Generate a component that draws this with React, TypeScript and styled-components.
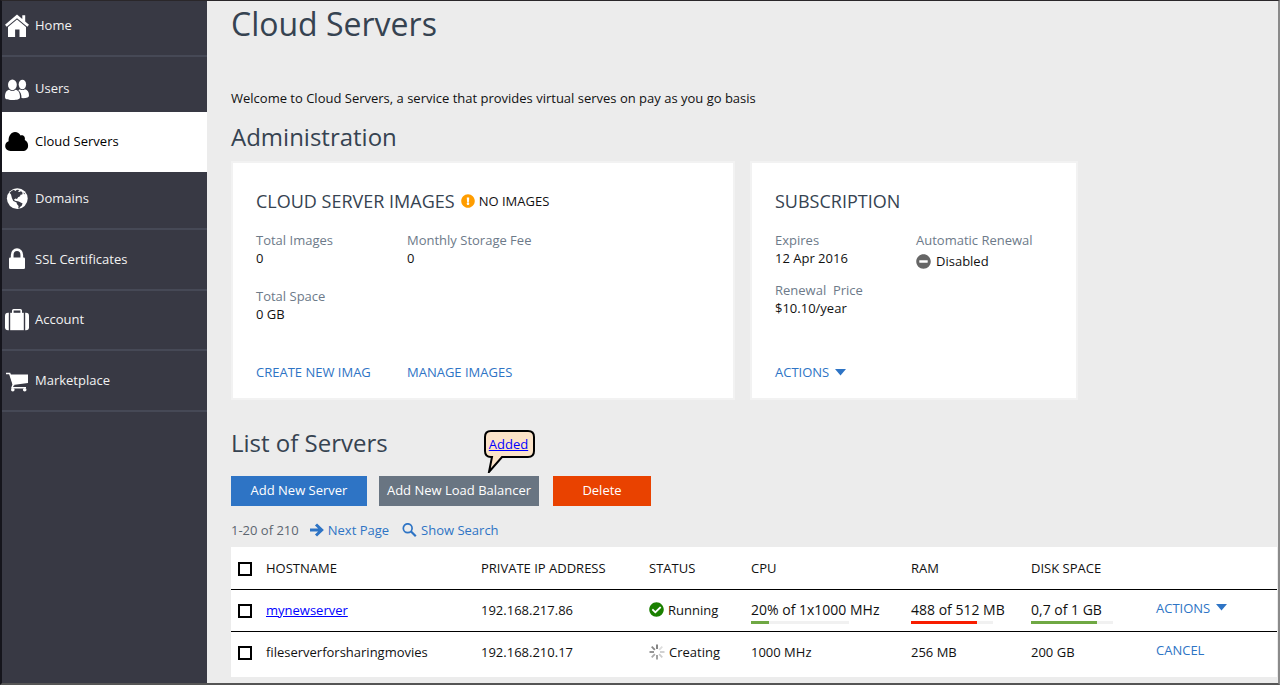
import React from 'react';
import styled, { createGlobalStyle } from 'styled-components';
import { FaCheckCircle, FaExclamationCircle, FaMinusCircle } from 'react-icons/fa';

const GlobalStyle = createGlobalStyle`
  *, *::before, *::after { box-sizing: border-box; }
  body { margin: 0; background: #ececec; }
  body, button { font: 13px/18px "Open Sans", sans-serif; color: #111; }
  button { border: 0; padding: 0; background: none; cursor: pointer; }
  h1, h2, h3, p, dl, dd, ul { margin: 0; padding: 0; }
`;

const Page = styled.div`
  display: flex;
  min-height: 100vh;
  border-style: solid;
  border-width: 1px 2px 2px;
  border-color: #2a272a #8a8a8a #555 #15151c;
`;

const Sidebar = styled.nav`
  flex: 0 0 205px;
  background: #383944;
`;

const NavItem = styled.a<{ $height: number; $top: number; $line?: boolean; $active?: boolean }>`
  display: flex;
  align-items: center;
  align-content: flex-start;
  flex-wrap: wrap;
  gap: 6px;
  height: ${(p) => p.$height}px;
  padding: ${(p) => p.$top}px 0 0 3px;
  border-bottom: ${(p) => (p.$line ? '2px solid #464956' : '0')};
  background: ${(p) => (p.$active ? '#fff' : 'transparent')};
  color: ${(p) => (p.$active ? '#000' : '#f2f2f2')};
  text-decoration: none;

  svg { width: 24px; height: 24px; color: ${(p) => (p.$active ? '#000' : '#fff')}; }
`;

const Main = styled.main`
  flex: 1;
  min-width: 0;
  padding: 1px 1px 6px 24px;
`;

const Title = styled.h1`
  font-size: 32px;
  line-height: 44px;
  font-weight: 400;
  color: #364351;
`;

const Intro = styled.p`
  margin: 43px 0 14px;
`;

const Heading = styled.h2`
  font-size: 24px;
  line-height: 32px;
  font-weight: 400;
  color: #364351;
`;

const Cards = styled.div`
  display: grid;
  grid-template-columns: 504fr 328fr;
  gap: 15px;
  max-width: 847px;
  margin: 8px 0 27px;
`;

const Card = styled.section`
  display: flex;
  flex-direction: column;
  min-height: 239px;
  padding: 26px 23px 17px;
  border: 2px solid #f2f2f2;
  background: #fff;
`;

const CardHead = styled.div`
  display: flex;
  align-items: center;
  gap: 6px;
  margin-bottom: 18px;
`;

const CardTitle = styled.h3`
  font-size: 18px;
  line-height: 24px;
  font-weight: 400;
  color: #364351;
`;

const Note = styled.span<{ $gap: number }>`
  display: flex;
  align-items: center;
  gap: ${(p) => p.$gap}px;
`;

const Facts = styled.dl<{ $column: number; $rowGap: number }>`
  display: grid;
  grid-template-columns: ${(p) => p.$column}px auto;
  row-gap: ${(p) => p.$rowGap}px;

  dt { color: #6d7a89; white-space: pre; }
  dd ${Note} { padding-top: 3px; }
`;

const CardLinks = styled.div<{ $column: number }>`
  display: grid;
  grid-template-columns: ${(p) => p.$column}px auto;
  justify-items: start;
  margin-top: auto;
`;

const LinkButton = styled.button`
  display: inline-flex;
  align-items: center;
  gap: 6px;
  color: #2e74c5;
`;

const ListHead = styled.div`
  margin-bottom: 17px;
`;

const Buttons = styled.div`
  display: flex;
  gap: 12px;
  margin-bottom: 15px;
`;

const ButtonSlot = styled.div`
  position: relative;
  margin-right: 2px;
`;

const Button = styled.button<{ $color: string; $width: number }>`
  width: ${(p) => p.$width}px;
  height: 30px;
  padding-bottom: 2px;
  background: ${(p) => p.$color};
  color: #fff;
`;

const Callout = styled.div`
  position: absolute;
  left: 105px;
  bottom: 33px;
  width: 51px;
  height: 43px;
  padding: 5px 2px 0 0;
  text-align: center;

  svg { position: absolute; inset: 0; }
  a { position: relative; color: #00f; }
`;

const Pager = styled.div`
  display: flex;
  align-items: center;
  margin-bottom: 8px;
  color: #5d6670;
  gap: 11px;
`;

const PagerButton = styled(LinkButton)`
  gap: 4px;
  & + & { margin-left: 2px; }
`;

const Table = styled.table`
  width: 100%;
  table-layout: fixed;
  border-collapse: collapse;
  background: #fff;

  th, td { height: 42px; padding: 11px 0 0; text-align: left; vertical-align: top; font-weight: 400; white-space: nowrap; }
  th { padding-top: 12px; }
  td { border-top: 1px solid #000; }
  tbody tr:last-child td { height: 46px; }
  td a { color: #00f; }
`;

const Check = styled.input`
  appearance: none;
  display: block;
  width: 14px;
  height: 14px;
  margin: 3px 0 0 7px;
  border: 2px solid #000;
  background: #fff;
  &:checked { background: #000; box-shadow: inset 0 0 0 2px #fff; }
`;

const RowAction = styled(LinkButton)`
  display: flex;
  margin-top: -2px;
`;

const Usage = styled.div`
  font-size: 14px;
`;

const Track = styled.div<{ $width: number }>`
  width: ${(p) => p.$width}px;
  height: 3px;
  margin-top: 2px;
  background: #f1f1f1;
`;

const Fill = styled.div<{ $color: string }>`
  height: 3px;
  background: ${(p) => p.$color};
`;

const HomeIcon = () => (
  <svg viewBox="0 0 24 24" fill="currentColor" aria-hidden="true">
    <path d="M0 11.800 12 1.600l5.300 4.500V2.200h2.900v6.300l3.800 3.300-1.700 2L12 5.200 1.700 13.800z" />
    <path d="m12 6.600 9 7.500V24h-6.500v-7.600h-4.400V24H3v-9.900z" />
  </svg>
);

const UsersIcon = () => (
  <svg viewBox="0 1 24 24" overflow="visible" fill="currentColor" aria-hidden="true">
    <g transform="translate(0 2.500)">
      <ellipse cx="7.400" cy="7.300" rx="4.400" ry="5.400" />
      <ellipse cx="17.400" cy="7" rx="3.700" ry="4.800" />
      <path d="M0 19.500c0-4.600 1.700-6.700 4.200-7.200 2 1.600 4.400 1.600 6.400 0 2.600.5 4.400 2.600 4.400 7.200 0 2.200-2.200 3-7.500 3S0 21.700 0 19.500z" />
      <path d="M13.300 12.700c.6-.4 1-.7 1.500-1 1.700 1.200 3.600 1.200 5.200 0 2.500.4 4 2.700 4 6.200 0 2-2.300 2.900-7.500 2.700.1-3.600-.8-6.200-3.200-7.900z" />
    </g>
  </svg>
);

const CloudIcon = () => (
  <svg viewBox="0 0 24 24" fill="currentColor" aria-hidden="true">
    <path d="M5.500 22C2.400 22 .2 20 .2 17.100c0-2.300 1.200-4 3.400-4.800C3.300 7.200 6.200 3.100 10 3.100c2.600 0 4.400 1.300 5.500 3.400 2.900-.7 5 1.400 4.300 4.600 2.100 1.100 3.300 3.200 3.300 5.600 0 3.200-2.200 5.300-5.300 5.300z" />
  </svg>
);

const GlobeIcon = () => (
  <svg viewBox="0 0 24 24" aria-hidden="true">
    <circle cx="12.300" cy="12.600" r="10.400" fill="currentColor" />
    <path
      fill="#383944"
      d="M4.600 6.700 6.500 5l2.300-1.200 1.500 1.100 1.700-1.200 2.500.3-1.700 1.500 2.200.6.900-1 1.700 1.600-.3 1.800-1.800.2-.4 1.500-2 1-1.100 1.900-1.500-.5-1.500.8 1 1.400 1.500.2 2.300.6 3.800 2-.9 2.200-1.700 1.300-.8 1.300-.9-.3.3-2-1.700-2-.3-1.600-3.300-1.400-1.400-3.100-.9-3.400z"
    />
    <path fill="#383944" d="m18.600 6.300 1.700 1.900-1.400-.1z" />
  </svg>
);

const LockIcon = () => (
  <svg viewBox="0 0 24 24" aria-hidden="true">
    <path d="M7.200 12V8a4.800 5.300 0 0 1 9.600 0v4" fill="none" stroke="currentColor" strokeWidth="2.700" />
    <rect x="4" y="10.500" width="16" height="11.500" rx="1.300" fill="currentColor" />
  </svg>
);

const SuitcaseIcon = () => (
  <svg viewBox="0 0 24 24" fill="currentColor" aria-hidden="true">
    <path d="M7.800 6V3.600q0-.8.8-.8h6.800q.8 0 .8.800V6" fill="none" stroke="currentColor" strokeWidth="1.600" />
    <path d="M3.800 5.800v17.400H3q-3 0-3-3V8.800q0-3 3-3z" />
    <path d="M5.200 5.800h13.600v17.400H5.200z" />
    <path d="M20.200 5.800h.8q3 0 3 3v11.400q0 3-3 3h-.8z" />
  </svg>
);

const CartIcon = () => (
  <svg viewBox="0 0 24 24" aria-hidden="true">
    <path d="M1 5.600h3.700l4 12.200M8.500 15.800 7 19.700h14" fill="none" stroke="currentColor" strokeWidth="1.500" />
    <path d="M4.900 6.400H23v8.700L8 17z" fill="currentColor" />
    <circle cx="7.800" cy="21.800" r="1.800" fill="currentColor" />
    <circle cx="19.700" cy="21.800" r="1.800" fill="currentColor" />
  </svg>
);

const Caret = () => (
  <svg width="11" height="7" viewBox="0 0 11 7" aria-hidden="true"><path d="M0 0h11L5.500 6.500z" fill="#2e74c5" /></svg>
);

const Arrow = () => (
  <svg width="14" height="14" viewBox="0 0 14 14" aria-hidden="true">
    <path d="M0 7h11M6 1.500 11.700 7 6 12.500" fill="none" stroke="#2e74c5" strokeWidth="3" />
  </svg>
);

const Search = () => (
  <svg width="15" height="15" viewBox="0 0 15 15" aria-hidden="true">
    <circle cx="5.700" cy="5.200" r="4.400" fill="none" stroke="#2e74c5" strokeWidth="1.700" />
    <path d="m8.800 8.300 5 5" stroke="#2e74c5" strokeWidth="2.200" />
  </svg>
);

const spokes = ['#777', '#ddd', '#ccc', '#ccc', '#999', '#aaa', '#888', '#888'];
const Spinner = () => (
  <svg width="16" height="16" viewBox="0 0 16 16" aria-hidden="true">
    {spokes.map((c, i) => (
      <path key={i} d="M8 .5v4.500" stroke={c} strokeWidth="1.800" transform={`rotate(${i * 45} 8 8)`} />
    ))}
  </svg>
);

const nav = [
  { label: 'Home', icon: <HomeIcon />, height: 56, top: 12, line: true },
  { label: 'Users', icon: <UsersIcon />, height: 55, top: 19 },
  { label: 'Cloud Servers', icon: <CloudIcon />, height: 60, top: 17, active: true },
  { label: 'Domains', icon: <GlobeIcon />, height: 58, top: 14, line: true },
  { label: 'SSL Certificates', icon: <LockIcon />, height: 61, top: 17, line: true },
  { label: 'Account', icon: <SuitcaseIcon />, height: 60, top: 16, line: true },
  { label: 'Marketplace', icon: <CartIcon />, height: 61, top: 17, line: true },
];

function Meter({ text, width, percent, color }: { text: string; width: number; percent: number; color: string }) {
  return (
    <Usage>
      {text}
      <Track $width={width}><Fill $color={color} style={{ width: `${percent}%` }} /></Track>
    </Usage>
  );
}

export default function App() {
  return (
    <>
      <GlobalStyle />
      <Page>
        <Sidebar aria-label="Main">
          {nav.map((n) => (
            <NavItem key={n.label} href="#" $height={n.height} $top={n.top} $line={n.line} $active={n.active}>
              {n.icon}
              {n.label}
            </NavItem>
          ))}
        </Sidebar>
        <Main>
          <Title>Cloud Servers</Title>
          <Intro>Welcome to Cloud Servers, a service that provides virtual serves on pay as you go basis</Intro>
          <Heading>Administration</Heading>
          <Cards>
            <Card>
              <CardHead>
                <CardTitle>CLOUD SERVER IMAGES</CardTitle>
                <Note $gap={4}><FaExclamationCircle size={14} color="#ff9d00" /> NO IMAGES</Note>
              </CardHead>
              <Facts $column={151} $rowGap={20}>
                <div><dt>Total Images</dt><dd>0</dd></div>
                <div><dt>Monthly Storage Fee</dt><dd>0</dd></div>
                <div><dt>Total Space</dt><dd>0 GB</dd></div>
              </Facts>
              <CardLinks $column={151}>
                <LinkButton>CREATE NEW IMAG</LinkButton>
                <LinkButton>MANAGE IMAGES</LinkButton>
              </CardLinks>
            </Card>
            <Card>
              <CardHead><CardTitle>SUBSCRIPTION</CardTitle></CardHead>
              <Facts $column={141} $rowGap={11}>
                <div><dt>Expires</dt><dd>12 Apr 2016</dd></div>
                <div><dt>Automatic Renewal</dt><dd><Note $gap={5}><FaMinusCircle size={15} color="#666" /> Disabled</Note></dd></div>
                <div><dt>{'Renewal  Price'}</dt><dd>$10.10/year</dd></div>
              </Facts>
              <CardLinks $column={141}>
                <LinkButton>ACTIONS <Caret /></LinkButton>
              </CardLinks>
            </Card>
          </Cards>
          <ListHead><Heading>List of Servers</Heading></ListHead>
          <Buttons>
            <Button $color="#2e74c5" $width={136}>Add New Server</Button>
            <ButtonSlot>
              <Button $color="#697582" $width={160}>Add New Load Balancer</Button>
              <Callout>
                <svg width="51" height="43" viewBox="0 0 51 43" aria-hidden="true">
                  <path d="M7 1h37q6 0 6 6v14q0 6-6 6H18L5 42l3-15H7q-6 0-6-6V7q0-6 6-6z" fill="#fbe3c8" stroke="#000" strokeWidth="2" />
                </svg>
                <a href="#">Added</a>
              </Callout>
            </ButtonSlot>
            <Button $color="#e94200" $width={98}>Delete</Button>
          </Buttons>
          <Pager>
            <span>1-20 of 210</span>
            <PagerButton><Arrow /> Next Page</PagerButton>
            <PagerButton><Search /> Show Search</PagerButton>
          </Pager>
          <Table>
            <colgroup>
              {[35, 215, 168, 102, 160, 120, 125].map((w, i) => <col key={i} style={{ width: w }} />)}
              <col />
            </colgroup>
            <thead>
              <tr>
                <th><Check type="checkbox" aria-label="Select all servers" /></th>
                <th>HOSTNAME</th>
                <th>PRIVATE IP ADDRESS</th>
                <th>STATUS</th>
                <th>CPU</th>
                <th>RAM</th>
                <th>DISK SPACE</th>
                <th aria-label="Actions" />
              </tr>
            </thead>
            <tbody>
              <tr>
                <td><Check type="checkbox" aria-label="Select mynewserver" /></td>
                <td><a href="#">mynewserver</a></td>
                <td>192.168.217.86</td>
                <td><Note $gap={4}><FaCheckCircle size={15} color="#1a8000" /> Running</Note></td>
                <td><Meter text="20% of 1x1000 MHz" width={98} percent={18} color="#6fa843" /></td>
                <td><Meter text="488 of 512 MB" width={82} percent={80} color="#f81d00" /></td>
                <td><Meter text="0,7 of 1 GB" width={82} percent={80} color="#6fa843" /></td>
                <td><RowAction>ACTIONS <Caret /></RowAction></td>
              </tr>
              <tr>
                <td><Check type="checkbox" aria-label="Select fileserverforsharingmovies" /></td>
                <td>fileserverforsharingmovies</td>
                <td>192.168.210.17</td>
                <td><Note $gap={4}><Spinner /> Creating</Note></td>
                <td>1000 MHz</td>
                <td>256 MB</td>
                <td>200 GB</td>
                <td><RowAction>CANCEL</RowAction></td>
              </tr>
            </tbody>
          </Table>
        </Main>
      </Page>
    </>
  );
}
